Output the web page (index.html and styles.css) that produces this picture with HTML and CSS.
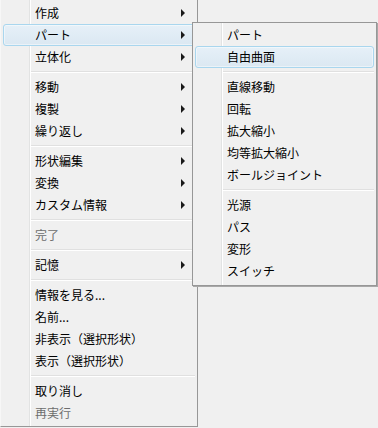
FILE: index.html
```html
<!DOCTYPE html>
<html lang="ja">
<head>
    <meta charset="UTF-8">
    <meta name="viewport" content="width=device-width, initial-scale=1.0">
    <title>メニュー</title>
    <link rel="stylesheet" href="styles.css">
</head>
<body>
    <div class="menu main-menu">
        <div class="item"><span class="label">作成</span><span class="arrow"></span></div>
        <div class="item active"><span class="label">パート</span><span class="arrow"></span></div>
        <div class="item"><span class="label">立体化</span><span class="arrow"></span></div>
        <div class="sep"></div>
        <div class="item"><span class="label">移動</span><span class="arrow"></span></div>
        <div class="item"><span class="label">複製</span><span class="arrow"></span></div>
        <div class="item"><span class="label">繰り返し</span><span class="arrow"></span></div>
        <div class="sep"></div>
        <div class="item"><span class="label">形状編集</span><span class="arrow"></span></div>
        <div class="item"><span class="label">変換</span><span class="arrow"></span></div>
        <div class="item"><span class="label">カスタム情報</span><span class="arrow"></span></div>
        <div class="sep"></div>
        <div class="item disabled"><span class="label">完了</span></div>
        <div class="sep"></div>
        <div class="item"><span class="label">記憶</span><span class="arrow"></span></div>
        <div class="sep"></div>
        <div class="item"><span class="label">情報を見る...</span></div>
        <div class="item"><span class="label">名前...</span></div>
        <div class="item"><span class="label">非表示（選択形状）</span></div>
        <div class="item"><span class="label">表示（選択形状）</span></div>
        <div class="sep"></div>
        <div class="item"><span class="label">取り消し</span></div>
        <div class="item disabled"><span class="label">再実行</span></div>

        <!-- サブメニュー -->
        <div class="menu sub-menu">
            <div class="item"><span class="label">パート</span></div>
            <div class="item active"><span class="label">自由曲面</span></div>
            <div class="sep"></div>
            <div class="item"><span class="label">直線移動</span></div>
            <div class="item"><span class="label">回転</span></div>
            <div class="item"><span class="label">拡大縮小</span></div>
            <div class="item"><span class="label">均等拡大縮小</span></div>
            <div class="item"><span class="label">ボールジョイント</span></div>
            <div class="sep"></div>
            <div class="item"><span class="label">光源</span></div>
            <div class="item"><span class="label">パス</span></div>
            <div class="item"><span class="label">変形</span></div>
            <div class="item"><span class="label">スイッチ</span></div>
        </div>
    </div>
</body>
</html>
```

FILE: styles.css
```css
body {
    margin: 0;
    background-color: #f0f0f0;
    font-family: "Noto Sans CJK JP", "Noto Sans", sans-serif;
    font-size: 12px;
    color: #000;
}

.menu {
    box-sizing: border-box;
    background-color: #f0f0f0;
    background-image: linear-gradient(to right,
        transparent 28px,
        #e2e3e3 28px, #e2e3e3 29px,
        #ffffff 29px, #ffffff 30px,
        transparent 30px);
}

.main-menu {
    position: relative;
    width: 198px;
    padding: 2px 0 2px 0;
    border-left: 1px solid #f7f7f7;
    border-right: 1px solid #979797;
    border-bottom: 1px solid #979797;
}

.sub-menu {
    position: absolute;
    left: 191px;
    top: 22px;
    width: 185px;
    padding: 1px 0 3px 0;
    border: 1px solid #979797;
    box-shadow: 1px 1px 0 #a8a8a8;
}

.item {
    display: flex;
    align-items: center;
    height: 22px;
    box-sizing: border-box;
    margin: 0 2px;
    padding: 0 9px 0 31px;
    border: 1px solid transparent;
    border-radius: 3px;
    line-height: 1;
    white-space: nowrap;
}

.item .label {
    flex: 1;
}

.item.active {
    border-color: #a9d6ee;
    background: linear-gradient(#e6f0f8, #dbe8f2);
    box-shadow: inset 0 0 0 1px rgba(255, 255, 255, 0.45);
}

.item.disabled {
    color: #6d6d6d;
}

.arrow {
    width: 0;
    height: 0;
    border-top: 4px solid transparent;
    border-bottom: 4px solid transparent;
    border-left: 4px solid #1a1a1a;
}

.sep {
    height: 1px;
    margin: 3px 2px 3px 30px;
    background-color: #e0e0e0;
    border-bottom: 1px solid #ffffff;
}
```
